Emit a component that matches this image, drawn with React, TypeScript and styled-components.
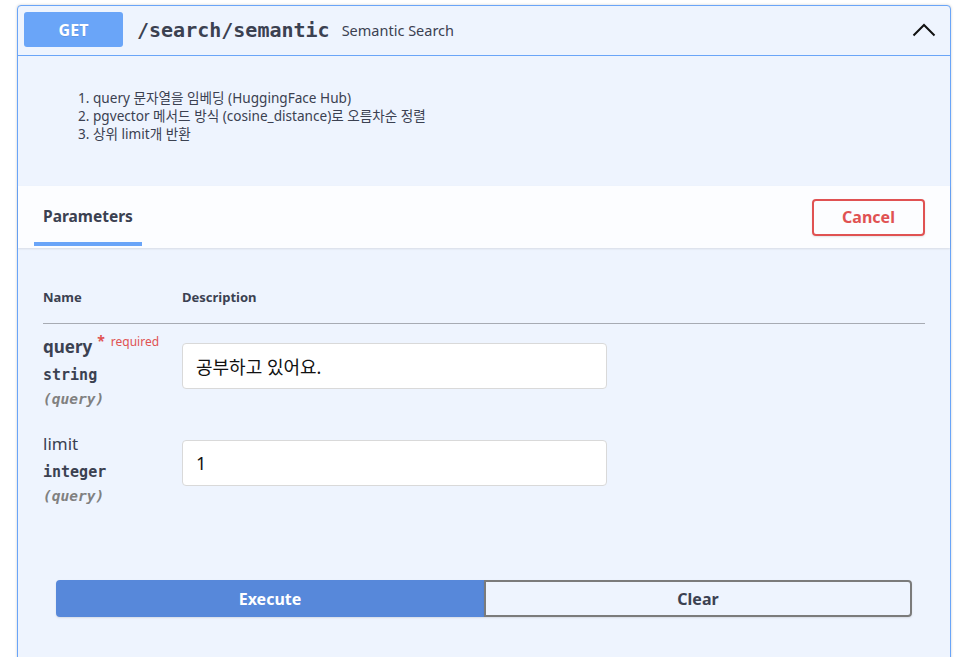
import React from "react";
import styled, { createGlobalStyle } from "styled-components";

const Global = createGlobalStyle`
  html, body { margin: 0; padding: 0; background: #ffffff; }
  body { font-family: "Noto Sans", "Noto Sans CJK KR", sans-serif; color: #3b4151; }
  * { box-sizing: border-box; }
`;

const Page = styled.div`
  padding: 5px 10px 0 17px;
  height: 657px;
  overflow: hidden;
`;

const OpBlock = styled.div`
  border: 1px solid #6aa5f8;
  border-radius: 4px;
  background: #eef4fe;
  box-shadow: 0 0 3px rgba(0, 0, 0, 0.19);
  padding-bottom: 80px;
`;

const Summary = styled.div`
  display: flex;
  align-items: center;
  height: 50px;
  padding: 0 14px 2px 6px;
  border-bottom: 1px solid #6aa5f8;
`;

const Method = styled.span`
  width: 99px;
  height: 35px;
  border-radius: 3px;
  background: #6aa5f8;
  color: #fff;
  font-weight: 700;
  font-size: 16px;
  display: flex;
  align-items: center;
  justify-content: center;
  text-shadow: 0 1px 0 rgba(0, 0, 0, 0.1);
`;

const Path = styled.span`
  margin-left: 14px;
  font-family: "DejaVu Sans Mono", monospace;
  font-weight: 700;
  font-size: 20px;
  color: #3b4151;
`;

const Summ = styled.span`
  margin-left: 12px;
  font-size: 14.5px;
  color: #3b4151;
  flex: 1;
`;

const Chevron = styled.svg`
  width: 24px;
  height: 14px;
`;

const Description = styled.div`
  padding: 33px 20px 43px;
  font-size: 13.6px;
  line-height: 18px;
  color: #3b4151;
`;

const List = styled.ol`
  margin: 0;
  padding-left: 55px;
`;

const SectionHeader = styled.div`
  display: flex;
  align-items: center;
  justify-content: space-between;
  height: 62px;
  padding: 0 25px 0 16px;
  background: rgba(255, 255, 255, 0.8);
  box-shadow: 0 1px 2px rgba(0, 0, 0, 0.1);
`;

const Tab = styled.div`
  align-self: stretch;
  display: flex;
  align-items: center;
  padding: 4px 9px 0;
  margin-bottom: 2px;
  border-bottom: 4px solid #6aa5f8;
  font-size: 15.5px;
  font-weight: 700;
  color: #3b4151;
`;

const CancelBtn = styled.button`
  width: 113px;
  height: 37px;
  border: 2px solid #e05252;
  border-radius: 4px;
  background: transparent;
  color: #e05252;
  font-family: inherit;
  font-size: 16px;
  font-weight: 700;
  box-shadow: 0 1px 2px rgba(0, 0, 0, 0.1);
`;

const TableWrap = styled.div`
  padding: 29px 25px 0;
`;

const Grid = styled.div`
  display: grid;
  grid-template-columns: 139px 1fr;
`;

const HeadCell = styled.div`
  font-size: 13px;
  font-weight: 700;
  line-height: 17px;
  padding: 12px 0 17px;
  border-bottom: 1px solid #a7abb3;
`;

const NameCell = styled.div`
  padding: 12px 0 13px;
  display: flex;
  flex-direction: column;
`;

const ParamName = styled.div<{ $required?: boolean }>`
  font-size: 17px;
  line-height: 22px;
  font-weight: ${(p) => (p.$required ? 700 : 400)};
  color: #3b4151;
  display: flex;
  align-items: flex-start;
`;

const Req = styled.span`
  font-size: 12px;
  line-height: 16px;
  font-weight: 400;
  color: #e05252;
  margin-left: 5px;
  position: relative;
  top: -3px;
  & b {
    font-size: 14px;
    margin-right: 6px;
  }
`;

const ParamType = styled.div`
  margin-top: 7px;
  font-family: "DejaVu Sans Mono", monospace;
  font-weight: 700;
  font-size: 15px;
  line-height: 20px;
`;

const ParamIn = styled.div`
  margin-top: 5px;
  font-family: "DejaVu Sans Mono", monospace;
  font-style: italic;
  font-weight: 700;
  font-size: 14.5px;
  line-height: 18px;
  color: #808080;
`;

const ValueCell = styled.div`
  padding-top: 19px;
`;

const Input = styled.input`
  width: 425px;
  height: 46px;
  border: 1px solid #d9d9d9;
  border-radius: 4px;
  background: #fff;
  padding: 0 13px;
  font-family: "Noto Sans", "Noto Sans CJK KR", sans-serif;
  font-size: 18px;
  color: #111;
  outline: none;
`;

const ExecWrap = styled.div`
  display: flex;
  padding: 62px 38px 0;
`;

const ExecBtn = styled.button<{ $primary?: boolean }>`
  flex: 1;
  height: 37px;
  font-family: inherit;
  font-size: 16px;
  font-weight: 700;
  border: 2px solid ${(p) => (p.$primary ? "#5788da" : "#7b7b7b")};
  background: ${(p) => (p.$primary ? "#5788da" : "transparent")};
  color: ${(p) => (p.$primary ? "#fff" : "#3b4151")};
  border-radius: ${(p) => (p.$primary ? "4px 0 0 4px" : "0 4px 4px 0")};
  box-shadow: 0 1px 2px rgba(0, 0, 0, 0.1);
`;

export default function App() {
  return (
    <Page>
      <Global />
      <OpBlock>
        <Summary>
          <Method>GET</Method>
          <Path>/search/semantic</Path>
          <Summ>Semantic Search</Summ>
          <Chevron viewBox="0 0 24 14">
            <polyline points="1.5,12.5 12,2 22.5,12.5" fill="none" stroke="#111" strokeWidth="2" />
          </Chevron>
        </Summary>
        <Description>
          <List>
            <li>query 문자열을 임베딩 (HuggingFace Hub)</li>
            <li>pgvector 메서드 방식 (cosine_distance)로 오름차순 정렬</li>
            <li>상위 limit개 반환</li>
          </List>
        </Description>
        <SectionHeader>
          <Tab>Parameters</Tab>
          <CancelBtn>Cancel</CancelBtn>
        </SectionHeader>
        <TableWrap>
          <Grid>
            <HeadCell>Name</HeadCell>
            <HeadCell>Description</HeadCell>
            <NameCell>
              <ParamName $required>
                query
                <Req>
                  <b>*</b>required
                </Req>
              </ParamName>
              <ParamType>string</ParamType>
              <ParamIn>(query)</ParamIn>
            </NameCell>
            <ValueCell>
              <Input defaultValue="공부하고 있어요." />
            </ValueCell>
            <NameCell>
              <ParamName>limit</ParamName>
              <ParamType>integer</ParamType>
              <ParamIn>(query)</ParamIn>
            </NameCell>
            <ValueCell>
              <Input defaultValue="1" />
            </ValueCell>
          </Grid>
        </TableWrap>
        <ExecWrap>
          <ExecBtn $primary>Execute</ExecBtn>
          <ExecBtn>Clear</ExecBtn>
        </ExecWrap>
      </OpBlock>
    </Page>
  );
}
